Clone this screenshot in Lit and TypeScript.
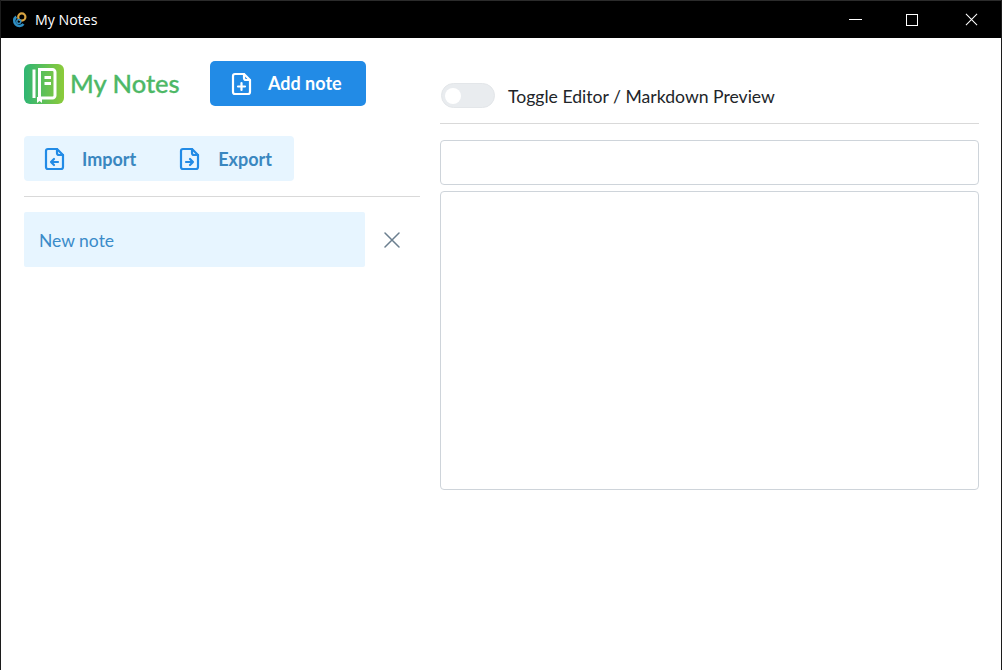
import { LitElement, css, html, svg, type TemplateResult } from 'lit';
import { customElement, state } from 'lit/decorators.js';

// outline of the file icons: sheet with a folded corner
const sheet = svg`<path d="M3 4a2 2 0 0 1 2-2h9l6 6v12a2 2 0 0 1-2 2H5a2 2 0 0 1-2-2z" /><path d="M14 2v4a2 2 0 0 0 2 2h4" />`;

const fileIcon = (inner: TemplateResult | ReturnType<typeof svg>) =>
  html`<svg class="file-icon" viewBox="0 0 23 24" fill="none" stroke="currentColor" stroke-width="2.2" stroke-linecap="round" stroke-linejoin="round">
    ${sheet}${inner}
  </svg>`;

@customElement('app-root')
export class AppRoot extends LitElement {
  @state() notes = ['New note'];

  render(): TemplateResult {
    return html`<div class="window">
      <header class="titlebar">
        <div class="title">
          <svg class="app-icon" viewBox="0 0 16 16" fill="none">
            <circle cx="9.800" cy="5" r="3.600" stroke="#d9a441" stroke-width="2.200" />
            <path d="M4.300 4.600A5.200 5.200 0 1 0 11.500 12" stroke="#2f8fc4" stroke-width="2.600" />
            <circle cx="6.800" cy="9.600" r="2" stroke="#2f8fc4" stroke-width="1.500" />
          </svg>
          <span>My Notes</span>
        </div>
        <div class="controls">
          <span class="control"><span class="minimize"></span></span>
          <span class="control"><span class="maximize"></span></span>
          <span class="control">
            <svg class="close" viewBox="0 0 14 14" stroke="#fff" stroke-width="1.100"><path d="M1 1l12 12M13 1L1 13" /></svg>
          </span>
        </div>
      </header>
      <main class="content">
        <section class="sidebar">
          <div class="top">
            <div class="brand">
              <svg class="logo" viewBox="0 0 40 40">
                <defs>
                  <linearGradient id="logo-fill" x1="0" y1="0" x2="1" y2="0">
                    <stop offset="0" stop-color="#2fb574" />
                    <stop offset="1" stop-color="#8ccb3a" />
                  </linearGradient>
                </defs>
                <rect width="40" height="40" rx="6" fill="url(#logo-fill)" />
                <g fill="none" stroke="#fff" stroke-width="3">
                  <path d="M10 5.500v28.500" />
                  <path d="M15.500 5.500h13a2.500 2.500 0 0 1 2.500 2.500v23.500a2.500 2.500 0 0 1-2.500 2.500h-13z" />
                  <path d="M20.500 13.500h6.500M20.500 19.500h6.500" />
                </g>
                <path d="M13 33v6l2.500-2 2.500 2v-6z" fill="#fff" />
              </svg>
              <span class="brand-name">My Notes</span>
            </div>
            <button class="add">
              ${fileIcon(svg`<path d="M11.500 11v7M8 14.500h7" />`)}
              <span>Add note</span>
            </button>
          </div>
          <div class="transfer">
            <button>
              ${fileIcon(svg`<path d="M15 15H8M11 12l-3 3 3 3" />`)}
              <span>Import</span>
            </button>
            <button>
              ${fileIcon(svg`<path d="M8 15h7M12 12l3 3-3 3" />`)}
              <span>Export</span>
            </button>
          </div>
          <hr class="rule sidebar-rule" />
          <ul class="notes">
            ${this.notes.map(
              (note) => html`<li>
                <span class="note-title">${note}</span>
                <svg class="remove" viewBox="0 0 16 16" fill="none" stroke="#6b7f8f" stroke-width="1.500" stroke-linecap="round">
                  <path d="M1 1l14 14M15 1L1 15" />
                </svg>
              </li>`
            )}
          </ul>
        </section>
        <section class="editor">
          <label class="toggle-row">
            <span class="switch"><span class="thumb"></span></span>
            <span>Toggle Editor / Markdown Preview</span>
          </label>
          <hr class="rule editor-rule" />
          <div class="field title-field"></div>
          <div class="field body-field"></div>
        </section>
      </main>
    </div>`;
  }

  static styles = css`
    :host {
      display: block;
      font-family: 'Lato', 'Open Sans', sans-serif;
    }

    .window {
      box-sizing: border-box;
      width: 1002px;
      height: 670px;
      display: flex;
      flex-direction: column;
      background: #fff;
      border-left: 1px solid #1c1c1c;
      border-right: 1px solid #1c1c1c;
    }

    .titlebar {
      flex: none;
      height: 38px;
      box-sizing: border-box;
      border-top: 1px solid #2b2b2b;
      display: flex;
      justify-content: space-between;
      background: #000;
      color: #fff;
    }

    .title {
      display: flex;
      align-items: center;
      gap: 7px;
      padding-left: 11px;
      font-family: 'Open Sans', sans-serif;
      font-size: 14.2px;
    }

    .app-icon {
      width: 16px;
      height: 16px;
    }

    .controls {
      display: flex;
    }

    .control {
      display: flex;
      align-items: center;
      justify-content: center;
      width: 60px;
    }

    .control:nth-child(1) {
      width: 56px;
    }

    .control:nth-child(2) {
      width: 58px;
    }

    .minimize {
      width: 13px;
      height: 1px;
      background: #fff;
    }

    .maximize {
      box-sizing: border-box;
      width: 12px;
      height: 12px;
      border: 1px solid #fff;
    }

    .close {
      width: 13px;
      height: 13px;
    }

    .content {
      flex: 1;
      display: grid;
      grid-template-columns: 396px 539px;
      gap: 20px;
      padding: 23px 0 0 23px;
      align-items: start;
    }

    .top {
      display: flex;
      align-items: center;
      gap: 30px;
    }

    .brand {
      display: flex;
      align-items: center;
      gap: 6px;
    }

    .logo {
      width: 40px;
      height: 40px;
    }

    .brand-name {
      width: 110px;
      padding-bottom: 2px;
      font-size: 25.5px;
      font-weight: 500;
      color: #4db866;
      -webkit-text-stroke: 0.3px #4db866;
      white-space: nowrap;
    }

    button {
      font-family: inherit;
      border: none;
      display: flex;
      align-items: center;
      cursor: pointer;
    }

    .add {
      width: 156px;
      height: 45px;
      padding: 0 0 0 20px;
      gap: 15px;
      border-radius: 5px;
      background: #228be6;
      color: #fff;
      font-size: 18px;
      font-weight: 700;
    }

    .add span {
      margin-bottom: 2px;
    }

    .file-icon {
      flex: none;
      width: 23px;
      height: 24px;
    }

    .transfer {
      display: inline-flex;
      margin-top: 30px;
      height: 45px;
      border-radius: 4px;
      background: #e7f5ff;
      vertical-align: top;
    }

    .transfer button {
      background: none;
      color: #3a87c0;
      font-size: 18px;
      font-weight: 700;
      gap: 16px;
      padding: 0 20px 0 19px;
    }

    .transfer button svg {
      color: #228be6;
    }

    .transfer button + button {
      gap: 17px;
      padding: 0 22px 0 22px;
    }

    .rule {
      margin: 0;
      border: none;
      height: 1px;
      background: #d9d9d9;
    }

    .sidebar-rule {
      margin-top: 15px;
    }

    .notes {
      list-style: none;
      margin: 15px 0 0;
      padding: 0;
    }

    .notes li {
      display: flex;
      align-items: center;
      gap: 19px;
    }

    .note-title {
      box-sizing: border-box;
      width: 341px;
      height: 55px;
      padding: 2px 0 0 15px;
      display: flex;
      align-items: center;
      border-radius: 2px;
      background: #e7f5ff;
      color: #3a8bc9;
      font-size: 17.5px;
    }

    .remove {
      width: 16px;
      height: 16px;
    }

    .toggle-row {
      display: flex;
      align-items: center;
      gap: 13px;
      height: 26px;
      margin-top: 22px;
      color: #212529;
      font-size: 17.6px;
    }

    .switch {
      box-sizing: border-box;
      width: 54px;
      height: 25px;
      margin: -2px 0 0 1px;
      padding: 4px 3px;
      border-radius: 13px;
      background: #e9ecef;
      border: 1px solid #e3e6e9;
    }

    .thumb {
      display: block;
      width: 16px;
      height: 16px;
      border-radius: 50%;
      background: #fff;
    }

    .editor-rule {
      margin-top: 14px;
    }

    .field {
      box-sizing: border-box;
      border: 1px solid #ced4da;
      border-radius: 4px;
      background: #fff;
    }

    .title-field {
      height: 45px;
      margin-top: 16px;
    }

    .body-field {
      height: 299px;
      margin-top: 6px;
    }
  `;
}

declare global {
  interface HTMLElementTagNameMap {
    'app-root': AppRoot;
  }
}
